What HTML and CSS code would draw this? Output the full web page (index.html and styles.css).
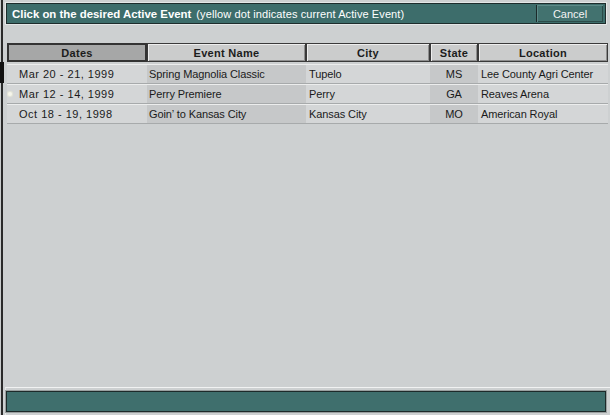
FILE: index.html
```html
<!DOCTYPE html>
<html>
<head>
<meta charset="utf-8">
<link rel="stylesheet" href="styles.css">
</head>
<body>
<div class="window">
  <div class="notch"></div>
  <div class="titlebar">
    <div class="title"><b>Click on the desired Active Event</b><span class="hint">(yellow dot indicates current Active Event)</span></div>
    <div class="cancel">Cancel</div>
  </div>
  <div class="table">
    <div class="thead">
      <div class="th th-sorted">Dates</div>
      <div class="th">Event Name</div>
      <div class="th">City</div>
      <div class="th">State</div>
      <div class="th">Location</div>
    </div>
    <div class="row">
      <div class="td dates"><span class="marker"></span>Mar 20 - 21, 1999</div>
      <div class="td name">Spring Magnolia Classic</div>
      <div class="td city">Tupelo</div>
      <div class="td state">MS</div>
      <div class="td loc">Lee County Agri Center</div>
    </div>
    <div class="row">
      <div class="td dates"><span class="marker"><span class="dot"></span></span>Mar 12 - 14, 1999</div>
      <div class="td name">Perry Premiere</div>
      <div class="td city">Perry</div>
      <div class="td state">GA</div>
      <div class="td loc">Reaves Arena</div>
    </div>
    <div class="row">
      <div class="td dates"><span class="marker"></span>Oct 18 - 19, 1998</div>
      <div class="td name">Goin’ to Kansas City</div>
      <div class="td city">Kansas City</div>
      <div class="td state">MO</div>
      <div class="td loc">American Royal</div>
    </div>
  </div>
  <div class="spacer"></div>
  <div class="footer">
    <div class="statusbar"></div>
  </div>
</div>
</body>
</html>
```

FILE: styles.css
```css
html, body {
  margin: 0;
  padding: 0;
  background: #c9cccd;
}

body {
  font-family: "Liberation Sans", Arial, sans-serif;
  color: #1a1a1a;
}

.window {
  position: relative;
  width: 607px;
  height: 415px;
  margin-left: 1px;
  border-left: 2px solid #2a2a2a;
  background: #cdd0d1;
  display: flex;
  flex-direction: column;
}

.notch {
  position: absolute;
  left: -3px;
  top: 62px;
  width: 4px;
  height: 21px;
  background: #111;
}

.titlebar {
  margin: 3px 4px 0 3px;
  height: 21px;
  box-sizing: border-box;
  background: #3d6d6b;
  border: 1px solid #1d2c2c;
  box-shadow: 0 0 0 1px #e4e7e7;
  display: flex;
  align-items: stretch;
  justify-content: space-between;
  color: #fff;
}

.title {
  display: flex;
  align-items: center;
  padding-left: 5px;
  font-size: 11.4px;
  white-space: nowrap;
}

.title b {
  font-weight: bold;
}

.hint {
  margin-left: 5px;
  font-size: 11px;
  letter-spacing: 0.1px;
}

.cancel {
  margin: 1px 2px 1px 0;
  width: 67px;
  box-sizing: border-box;
  background: #42726f;
  border-left: 1px solid #1b2a2a;
  box-shadow: inset 1px 1px 0 #5d8a88, inset -1px -1px 0 #2a4a48;
  display: flex;
  align-items: center;
  justify-content: center;
  font-size: 11px;
  color: #f4f4f4;
}

.table {
  margin: 19px 2px 0 4px;
}

.thead,
.row {
  display: grid;
  grid-template-columns: 140px 159px 124px 48px 1fr;
}

.thead {
  height: 19px;
  margin-bottom: 2px;
}

.th {
  box-sizing: border-box;
  border: 1px solid #3a3a3a;
  background: #cbcccc;
  box-shadow: inset 1px 1px 0 #eeeeee, inset -1px -1px 0 #8e8e8e;
  display: flex;
  align-items: center;
  justify-content: center;
  font-size: 11px;
  font-weight: bold;
  letter-spacing: 0.3px;
  color: #1c1c1c;
}

.th-sorted {
  background: #a6a7a7;
  border: 2px solid #333;
  box-shadow: none;
}

.row {
  height: 20px;
  box-sizing: border-box;
  background: #d4d6d7;
  border-top: 1px solid #eceded;
  border-bottom: 1px solid #a7aaab;
  font-size: 11px;
  letter-spacing: -0.1px;
}

.td {
  display: flex;
  align-items: center;
  white-space: nowrap;
  overflow: hidden;
}

.dates {
  letter-spacing: 0.5px;
}

.marker {
  width: 12px;
  flex: none;
  display: flex;
  align-items: center;
}

.dot {
  width: 4px;
  height: 4px;
  margin-left: 1px;
  border-radius: 50%;
  background: #f6f6ec;
  box-shadow: 0 0 1px 1px #e6e6d8;
}

.name {
  padding-left: 2px;
  background: #c6c8c9;
}

.city {
  padding-left: 3px;
}

.state {
  justify-content: center;
  background: #c6c8c9;
}

.loc {
  padding-left: 3px;
}

.spacer {
  flex: 1;
}

.footer {
  margin-left: 2px;
  border-top: 1px solid #f1f2f2;
  border-left: 1px solid #e6e8e8;
  padding: 3px 4px 3px 0;
}

.statusbar {
  height: 21px;
  box-sizing: border-box;
  background: #3f6f6d;
  border: 1px solid #1d2a2a;
  box-shadow: 0 0 0 1px #9aa0a0;
}
```
